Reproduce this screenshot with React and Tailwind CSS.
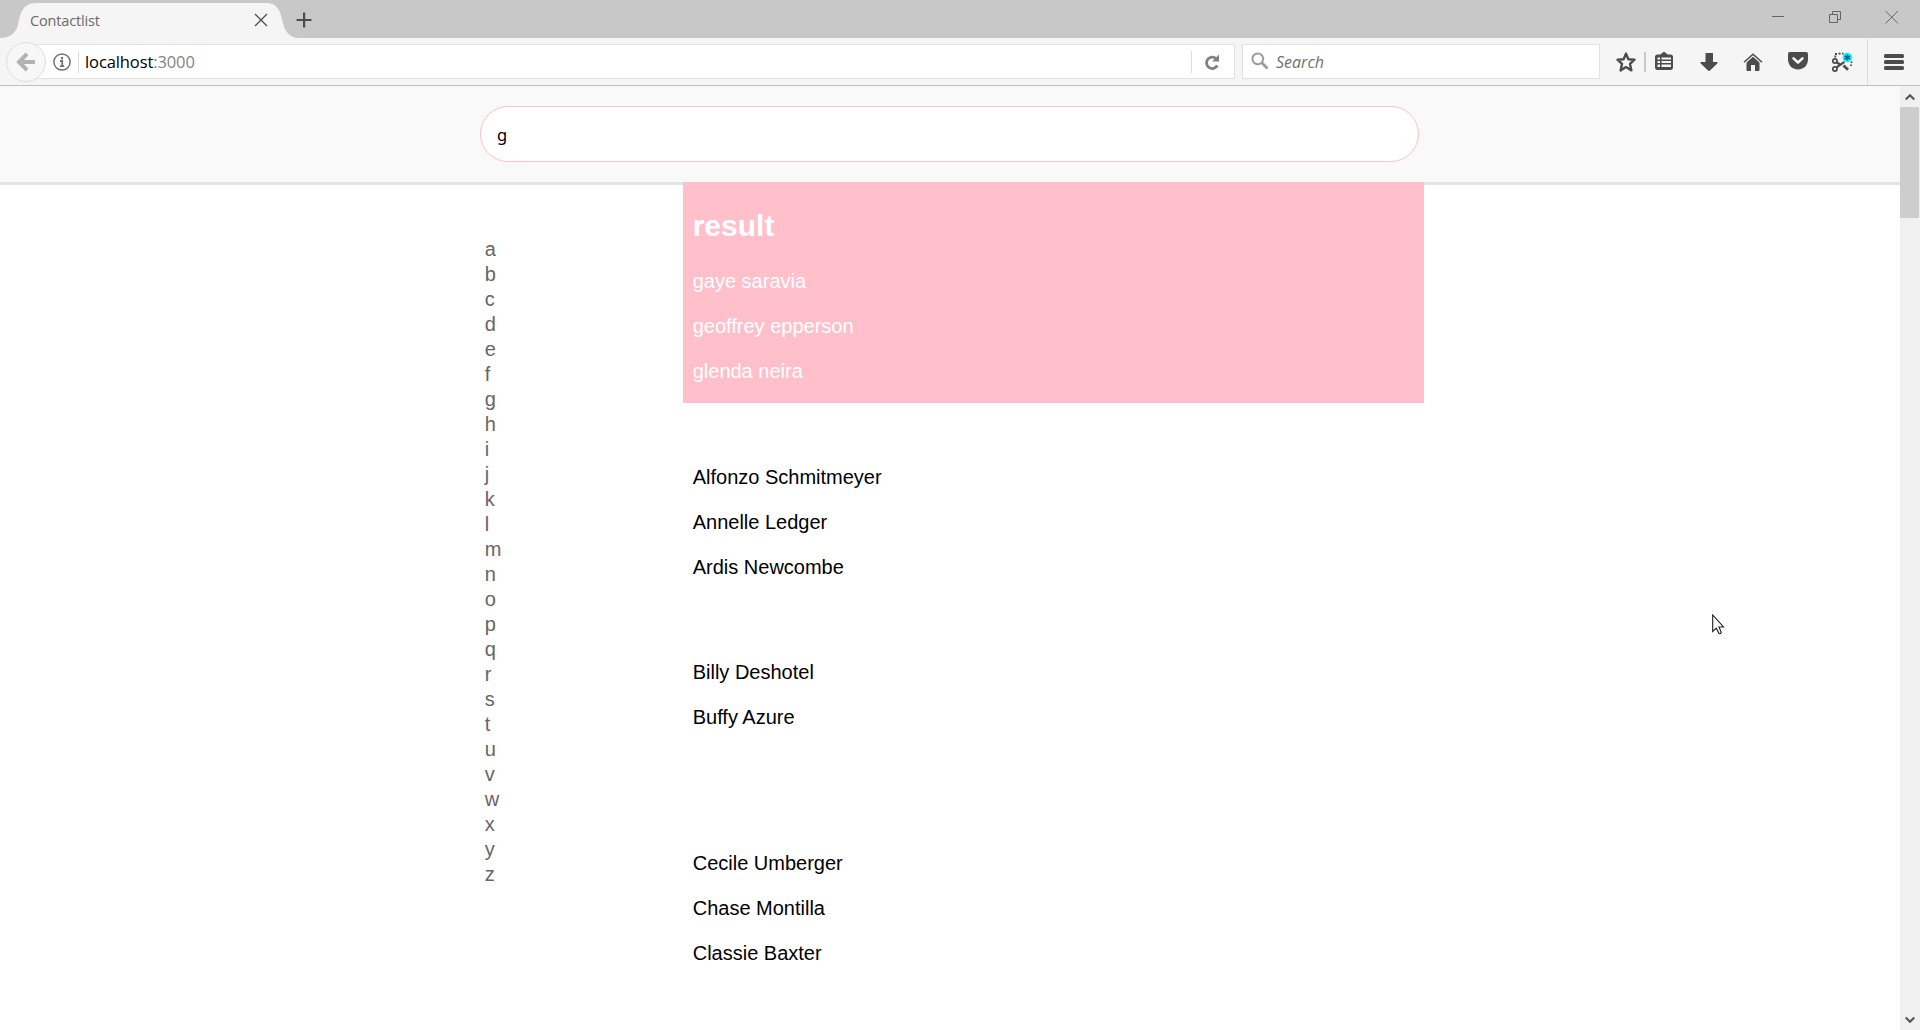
const letters = 'abcdefghijklmnopqrstuvwxyz'.split('');
const results = ['gaye saravia', 'geoffrey epperson', 'glenda neira'];

function TabStrip() {
  return (
    <div className="relative flex h-[38px] w-full shrink-0 bg-[#c8c8c8]">
      <svg className="absolute left-0 top-0" width="300" height="38" viewBox="0 0 300 38">
        <path
          d="M0 38 C9 38 15.500 34 18 25 C20 14 22.500 3 36 3 H266 C278 3 280.500 12 282.500 21 C284.500 31 289 38 299 38 Z"
          fill="#f5f5f5"
        />
      </svg>
      <div className="relative flex w-[316px] items-center">
        <span className="mt-[3px] ml-[30px] w-[223.500px] font-['Open_Sans',sans-serif] text-[14.500px] leading-5 tracking-[-0.150px] text-[#6a6a6a]">
          Contactlist
        </span>
        <svg className="mt-[2px]" width="14" height="14" viewBox="0 0 14 14" stroke="#4c4c4c" strokeWidth="1.300" fill="none">
          <path d="M1 1 L13 13 M13 1 L1 13" />
        </svg>
        <svg className="mt-px ml-[28.500px]" width="16" height="16" viewBox="0 0 16 16" fill="#4c4c4c">
          <path d="M7 0.500h2.200v6.500h6.300v2h-6.300v6.500h-2.200v-6.500h-6.500v-2h6.500z" />
        </svg>
      </div>
      <div className="ml-auto flex items-start gap-[45px] pr-[21px] pt-[11px]">
        <svg width="12" height="13" viewBox="0 0 12 13"><path d="M0 5.500h12" stroke="#666" /></svg>
        <svg className="-mr-px" width="12" height="12" viewBox="0 0 12 12" fill="none" stroke="#666">
          <path d="M0.500 3.500h8v8h-8z M3.500 3.500v-3h8v8h-3" />
        </svg>
        <svg width="14" height="13" viewBox="0 0 14 13"><path d="M0.500 0L13 12.500M13 0L0.500 12.500" stroke="#666" strokeWidth="1" /></svg>
      </div>
    </div>
  );
}

function ToolIcons() {
  return (
    <div className="flex h-full items-center text-[#4c4c4c]">
      <svg className="ml-[16px]" width="20" height="20" viewBox="0 0 20 20" fill="none" stroke="currentColor" strokeWidth="2.400" strokeLinejoin="round">
        <path d="M10 1.600 L12.400 7.200 L18.500 7.700 L14 11.900 L15.400 18.400 L10 15.100 L4.600 18.400 L6 11.900 L1.500 7.700 L7.600 7.200 Z" />
      </svg>
      <div className="ml-[8px] h-[20px] w-[2px] bg-[#c9c9c9]" />
      <svg className="ml-[9px] -mt-px" width="18" height="20" viewBox="0 0 18 20">
        <path d="M2.500 3.500 H5.500 C6 2 7.500 2.500 9 0.500 C10.500 2.500 12 2 12.500 3.500 H15.500 Q18 3.500 18 6 V16 Q18 19 15.500 19 H2.500 Q0 19 0 16 V6 Q0 3.500 2.500 3.500Z" fill="currentColor" />
        <path d="M2.500 6.500h2.500v2h-2.500z M6.500 6.500h9.500v2h-9.500z M2.500 10h2.500v2h-2.500z M6.500 10h9.500v2h-9.500z M2.500 13.500h2.500v2.500h-2.500z M6.500 13.500h9.500v2.500h-9.500z" fill="#f5f5f5" />
      </svg>
      <svg className="ml-[27px]" width="18" height="18" viewBox="0 0 18 18">
        <path d="M5.500 0H13V9H17Q18 9.500 17.300 10.500L10 17.500Q9 18.300 8 17.500L0.700 10.500Q0 9.500 1 9H5.500Z" fill="currentColor" />
      </svg>
      <svg className="ml-[25px]" width="20" height="18" viewBox="0 0 20 18">
        <path d="M1 9.300L10 1.200L19 9.300" fill="none" stroke="currentColor" strokeWidth="1.500" />
        <path d="M10 3.800L16.500 9.500V17Q16.500 18 15.500 18H12V12H8V18H4.500Q3.500 18 3.500 17V9.500Z" fill="currentColor" />
      </svg>
      <svg className="ml-[24.500px] -mt-px" width="20" height="18" viewBox="0 0 20 18">
        <path d="M2 0H18Q20 0 20 2V7C20 14 15 17.500 10 17.500C5 17.500 0 14 0 7V2Q0 0 2 0Z" fill="currentColor" />
        <path d="M5.500 6.300L10 10.500L14.500 6.300" fill="none" stroke="#fff" strokeWidth="2.400" strokeLinecap="round" strokeLinejoin="round" />
      </svg>
      <svg className="ml-[24.500px]" width="22" height="20" viewBox="0 0 22 20" fill="none" stroke="currentColor">
        <circle cx="2.900" cy="9" r="2.100" strokeWidth="1.800" />
        <circle cx="2.900" cy="17" r="2.100" strokeWidth="1.800" />
        <path d="M4.800 10.500L9 13M4.600 15.300L12.500 9.800" strokeWidth="2.200" />
        <path d="M11.500 13.500L16 17.800" strokeWidth="2.600" />
        <path d="M3 2H5M6.500 1.700H8.500M10 1.700H11.500M3.300 3.500V5.500M19.500 9.500V11M19 12.500V14" strokeWidth="1.800" />
        <circle cx="15.300" cy="5.500" r="4.700" fill="#00f4ff" stroke="none" />
        <path d="M15.300 2.500V8.500M12.600 4L18 7M18 4L12.600 7" strokeWidth="1.500" stroke="#075b80" />
      </svg>
      <div className="ml-[13px] h-[46px] w-px bg-[#dcdcdc]" />
      <svg className="ml-[16px]" width="20" height="18" viewBox="0 0 20 18" fill="currentColor">
        <rect x="0" y="1" width="20" height="4" rx="1.500" />
        <rect x="0" y="7" width="20" height="4" rx="1.500" />
        <rect x="0" y="13" width="20" height="4" rx="1.500" />
      </svg>
    </div>
  );
}

function Toolbar() {
  return (
    <div className="flex h-[48px] w-full shrink-0 items-center border-b border-[#c1c1c1] bg-[#f5f5f5] font-['Open_Sans',sans-serif]">
      <div className="z-10 ml-[6px] flex size-[40px] shrink-0 items-center justify-center rounded-full border border-[#dedede] bg-[#f7f7f7]">
        <svg width="20" height="20" viewBox="0 0 20 20" fill="none" stroke="#b2b2b2">
          <path d="M19 10H4" strokeWidth="4" />
          <path d="M11 1.800L3 10L11 18.200" strokeWidth="4" />
        </svg>
      </div>
      <div className="-ml-[12px] flex h-[35px] w-[1201px] items-center border border-[#e2e2e2] bg-white pl-[18px]">
        <svg width="18" height="18" viewBox="0 0 18 18" fill="none" stroke="#737373">
          <circle cx="9" cy="9" r="8.100" strokeWidth="1.500" />
          <path d="M9 4V6.300" strokeWidth="2.200" />
          <path d="M7 8H9.200V13M7 13.200H11.200" strokeWidth="1.800" />
        </svg>
        <div className="ml-[7px] h-[22px] w-px bg-[#dcdcdc]" />
        <span className="ml-[6px] text-[16.500px] leading-5 tracking-[-0.1px] text-black">
          localhost<span className="text-[#858585]">:3000</span>
        </span>
        <div className="ml-auto h-[22px] w-px bg-[#dcdcdc]" />
        <svg className="ml-[13px] mr-[14px]" width="15" height="16" viewBox="0 0 15 16">
          <path d="M11 4.500A5.700 5.700 0 1 0 12.300 11.500" fill="none" stroke="#808080" strokeWidth="2.800" />
          <path d="M14 0.500V7.500H7Z" fill="#808080" />
        </svg>
      </div>
      <div className="ml-[7px] flex h-[35px] w-[358px] items-center border border-[#e2e2e2] bg-white pl-[8px]">
        <svg className="-mt-px" width="18" height="18" viewBox="0 0 18 18" fill="none" stroke="#9a9a9a">
          <circle cx="6.800" cy="6.800" r="5.400" strokeWidth="2" />
          <path d="M10.800 10.800L16.500 16.500" strokeWidth="2.800" />
        </svg>
        <span className="ml-[7px] text-[16px] italic leading-5 text-[#707070]">Search</span>
      </div>
      <ToolIcons />
    </div>
  );
}

function Names({ items, className }) {
  return (
    <ul className={className}>
      {items.map((name) => (
        <li key={name} className="h-[45px] leading-[25px]">{name}</li>
      ))}
    </ul>
  );
}

function Scrollbar() {
  return (
    <div className="flex w-[20px] shrink-0 flex-col bg-[#f0f0f0]">
      <div className="flex h-[21px] items-center justify-center pr-px">
        <svg width="10" height="8" viewBox="0 0 10 8"><path d="M0.700 6.500L5 2.200L9.300 6.500" fill="none" stroke="#555" strokeWidth="2.200" /></svg>
      </div>
      <div className="h-[111px] w-[19px] bg-[#cdcdcd]" />
      <div className="mt-auto flex h-[20px] items-center justify-center pr-px">
        <svg width="10" height="8" viewBox="0 0 10 8"><path d="M0.700 1.500L5 5.800L9.300 1.500" fill="none" stroke="#555" strokeWidth="2.200" /></svg>
      </div>
    </div>
  );
}

export default function App() {
  return (
    <div className="relative flex h-[1030px] w-[1920px] flex-col overflow-hidden bg-white">
      <TabStrip />
      <Toolbar />
      <div className="flex min-h-0 flex-1">
        <div className="flex min-w-0 flex-1 flex-col font-['Liberation_Sans',Arial,sans-serif] text-[20px]">
          <header className="h-[99px] shrink-0 border-b-[3px] border-[#e5e5e5] bg-[#f9f9f9] pl-[480px] pt-[20px]">
            <div className="flex h-[56px] w-[939px] items-center rounded-full border border-[#ffc0cb] bg-white pl-[16px] font-['Noto_Sans',sans-serif] text-[16.500px] leading-6 text-black">
              <span className="mt-px">g</span>
            </div>
          </header>
          <div className="flex">
            <nav className="w-[683px] shrink-0 pl-[484.700px] pt-[52px] text-[#666]">
              {letters.map((l) => (
                <div key={l} className="h-[25px] leading-[25px]">{l}</div>
              ))}
            </nav>
            <main className="w-[741px]">
              <section className="-mt-[3px] h-[221px] bg-[#ffc0cb] pl-[9.700px] pt-[25px] text-white">
                <h2 className="mb-[25px] h-[37px] text-[30px] font-bold leading-[37px]">result</h2>
                <Names items={results} />
              </section>
              <div className="pl-[9.700px] text-black">
                <Names className="pt-[62px]" items={['Alfonzo Schmitmeyer', 'Annelle Ledger', 'Ardis Newcombe']} />
                <Names className="pt-[60px]" items={['Billy Deshotel', 'Buffy Azure']} />
                <Names className="pt-[101px]" items={['Cecile Umberger', 'Chase Montilla', 'Classie Baxter']} />
              </div>
            </main>
          </div>
        </div>
        <Scrollbar />
      </div>
      <svg className="absolute left-[1712px] top-[614px]" width="14" height="21" viewBox="0 0 14 21">
        <path d="M0.700 1V17.500L4.300 14.200L7 19.500Q8.500 20.200 9.300 18.500L7 13H11.500Z" fill="#fff" stroke="#1c1c28" strokeWidth="1.100" />
      </svg>
    </div>
  );
}
